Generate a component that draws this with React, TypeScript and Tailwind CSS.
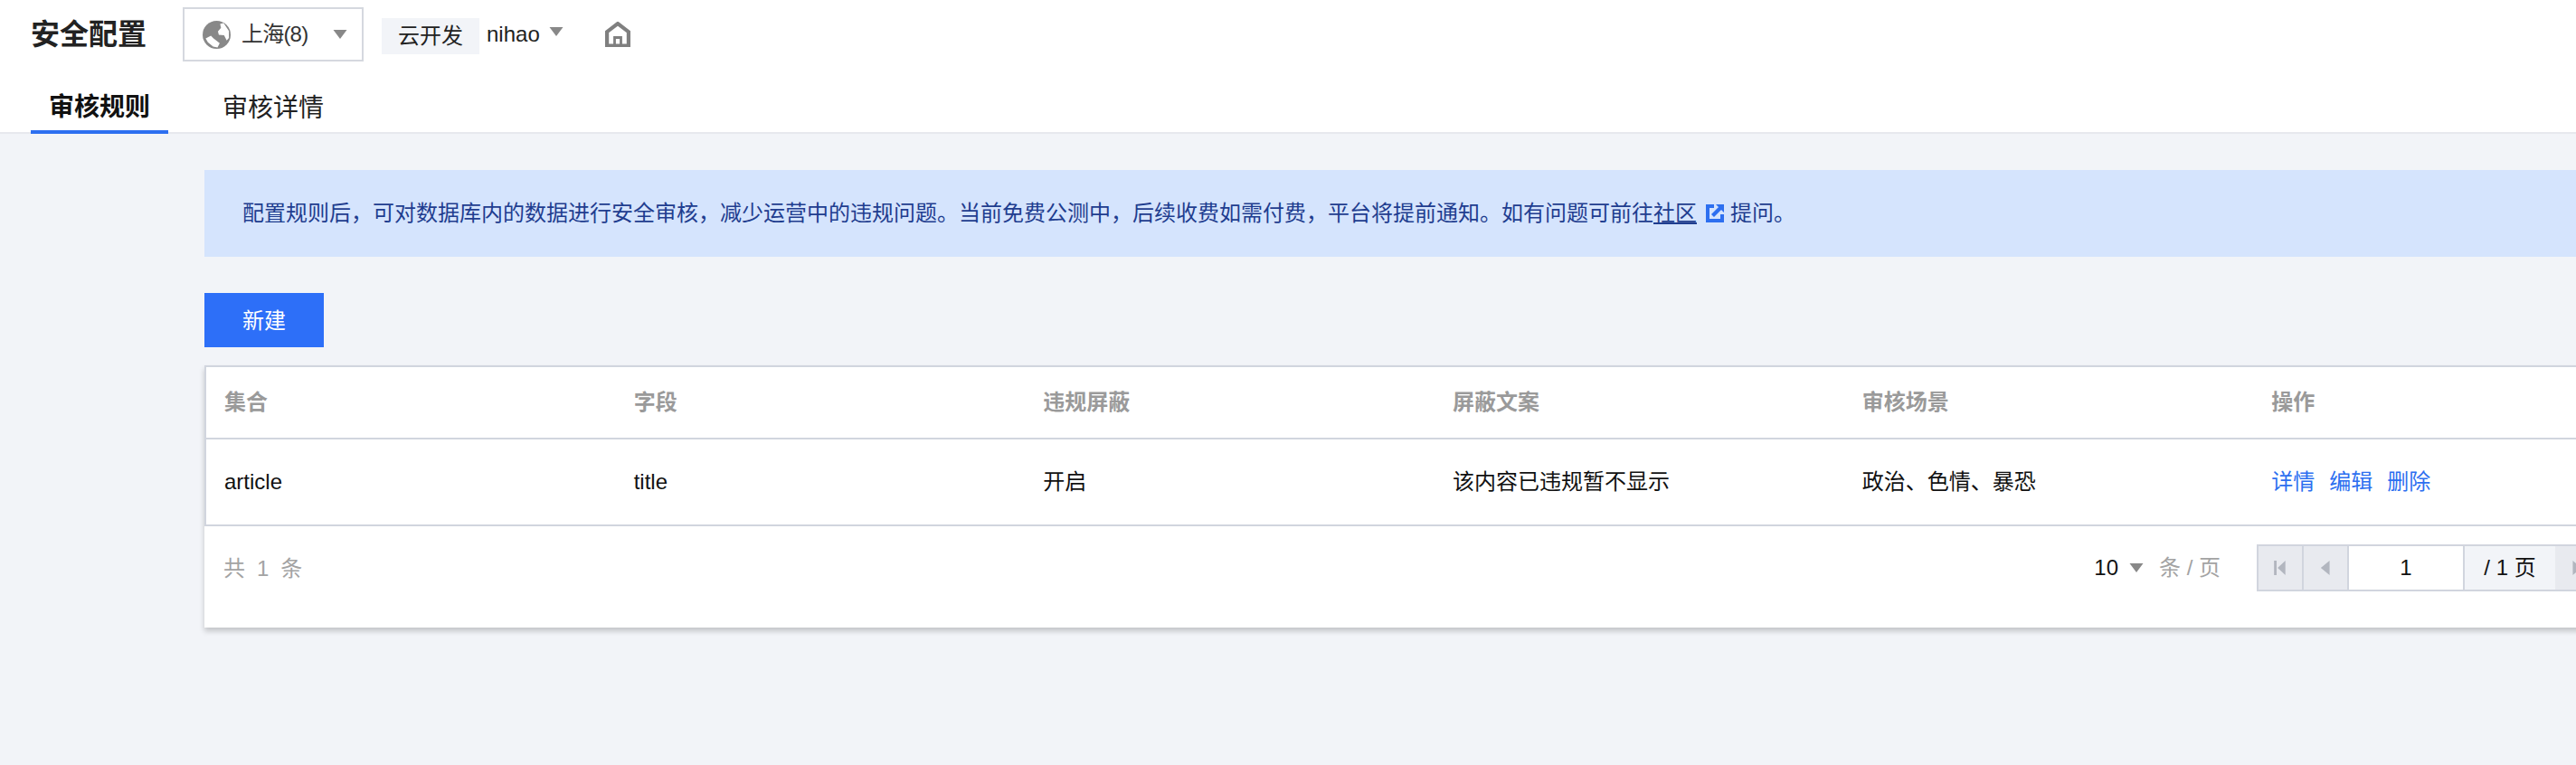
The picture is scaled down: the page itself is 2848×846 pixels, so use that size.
import { ReactNode } from "react";

const columns = ["集合", "字段", "违规屏蔽", "屏蔽文案", "审核场景", "操作"];
const cells = ["article", "title", "开启", "该内容已违规暂不显示", "政治、色情、暴恐"];

function Caret({ className }: { className: string }) {
  return (
    <svg viewBox="0 0 12 8" className={className} fill="currentColor">
      <path d="M0 0h12L6 8z" />
    </svg>
  );
}

function Globe() {
  return (
    <svg viewBox="0 0 32 32" className="w-[31px] h-[31px] shrink-0">
      <circle cx="16" cy="16" r="16" fill="#888888" />
      <path d="M20 3.500l4-1 6 9v8l-2.500 3-3-6-6-.5-1-4 3.500-4z" fill="#ffffff" />
      <path d="M3.500 20l6-3 3 3 7 5.500-2.500 5-5-1-6-5z" fill="#ffffff" />
    </svg>
  );
}

function PageButton({ last, flip }: { last?: boolean; flip?: boolean }) {
  return (
    <div className={`w-[50px] h-full flex items-center justify-center bg-[#e8eaef] text-[#b2b6bf] ${flip ? "rotate-180 border-l-2" : "border-r-2"} border-[#d1d5de]`}>
      <svg viewBox="0 0 12 14" className="w-[14px] h-[16px]" fill="currentColor">
        {last && <path d="M0 0h2.500v14H0z" />}
        <path d={last ? "M11 0v14L3.500 7z" : "M10 0v14L1.500 7z"} />
      </svg>
    </div>
  );
}

function Cell({ children, className = "" }: { children: ReactNode; className?: string }) {
  return <div className={`px-[20px] flex items-center ${className}`}>{children}</div>;
}

export default function App() {
  return (
    <div className="w-[2848px] h-[846px] overflow-hidden bg-[#f2f4f8] text-[#111111] font-['Liberation_Sans','Noto_Sans_CJK_SC',sans-serif]">
      <header className="bg-white h-[148px] border-b-2 border-[#e7e9ee]">
        <div className="h-[76px] pl-[34px] flex items-center">
          <h1 className="text-[32px] font-bold text-[#222222] w-[168px]">安全配置</h1>
          <div className="w-[200px] h-[60px] border-2 border-[#d5d8df] flex items-center pl-[20px] gap-[12px] text-[24px] text-[#333333]">
            <Globe />
            <span className="tracking-[-0.8px] whitespace-nowrap">上海(8)</span>
            <Caret className="w-[16px] h-[10px] text-[#888888] ml-[16px]" />
          </div>
          <span className="ml-[20px] mt-[4px] w-[108px] h-[40px] bg-[#f2f4f8] flex items-center justify-center text-[24px] text-[#222222] mr-[8px]">云开发</span>
          <span className="text-[24px] text-[#222222]">nihao</span>
          <Caret className="w-[16px] h-[10px] text-[#888888] ml-[10px] mb-[6px]" />
          <svg viewBox="0 0 20 20" className="w-[28px] h-[28px] ml-[46px] text-[#7f7f7f]" fill="none" stroke="currentColor">
            <path d="M1.500 19V8L10 1.500 18.500 8v11z" strokeWidth="3" />
            <path d="M7.500 19v-6.500h5V19" strokeWidth="2" />
          </svg>
        </div>
        <nav className="h-[70px] pl-[34px] flex">
          <div className="w-[152px] h-[72px] border-b-4 border-[#2d6ff0] flex items-center justify-center pt-[18px] text-[28px] font-bold text-[#111111]">审核规则</div>
          <div className="ml-[60px] h-[70px] flex items-center justify-center pt-[18px] text-[28px] text-[#222222]">审核详情</div>
        </nav>
      </header>

      <main className="pl-[226px] pt-[40px] w-[2944px]">
        <div className="h-[96px] bg-[#d5e4fd] pl-[42px] flex items-center text-[#1f3d8f] text-[24px]">
          配置规则后，可对数据库内的数据进行安全审核，减少运营中的违规问题。当前免费公测中，后续收费如需付费，平台将提前通知。如有问题可前往<span className="underline">社区</span>
          <svg viewBox="0 0 20 20" className="w-[20px] h-[20px] ml-[10px] mr-[7px]">
            <path d="M0 0h9v4H4v12h12v-5h4v9H0z" fill="#2d6ff0" />
            <path d="M11 0h9v9zM14 3l3 3-8 8-3-3z" fill="#2d6ff0" />
          </svg>
          提问。
        </div>

        <button className="mt-[40px] w-[132px] h-[60px] block pt-[2px] bg-[#2d6ff8] text-white text-[24px]">新建</button>

        <div className="mt-[20px] w-full bg-white shadow-[0_4px_6px_rgba(0,0,0,0.2)] border-t-2 border-[#d1d5de] text-[24px]">
          <div className="grid grid-cols-6 h-[80px] border-b-2 border-l-2 border-[#d1d5de] text-[#9a9a9a] font-bold">
            {columns.map((c) => (
              <Cell key={c}>{c}</Cell>
            ))}
          </div>
          <div className="grid grid-cols-6 h-[96px] border-b-2 border-l-2 border-[#d1d5de] text-[#111111]">
            {cells.map((c) => (
              <Cell key={c}>{c}</Cell>
            ))}
            <Cell className="gap-[16px] text-[#2d6ff0]">
              <span>详情</span>
              <span>编辑</span>
              <span>删除</span>
            </Cell>
          </div>
          <div className="h-[112px] pl-[21px] pt-[20px] flex items-start">
            <div className="h-[52px] pt-[2px] flex items-center gap-[13px] text-[#a3a3a3]">
              <span>共</span>
              <span>1</span>
              <span>条</span>
            </div>
            <div className="ml-auto mr-[17px] flex items-center">
              <span className="mr-[12px]">10</span>
              <Caret className="w-[16px] h-[10px] text-[#888888] mr-[17px]" />
              <span className="text-[#a3a3a3] mr-[40px]">条 / 页</span>
              <div className="h-[52px] flex border-2 border-[#d1d5de]">
                <PageButton last />
                <PageButton />
                <div className="w-[128px] flex items-center justify-center bg-white border-r-2 border-[#d1d5de]">1</div>
                <div className="w-[100px] flex items-center justify-center bg-[#f2f4f8]">/ 1 页</div>
                <PageButton flip />
                <PageButton last flip />
              </div>
            </div>
          </div>
        </div>
      </main>
    </div>
  );
}
